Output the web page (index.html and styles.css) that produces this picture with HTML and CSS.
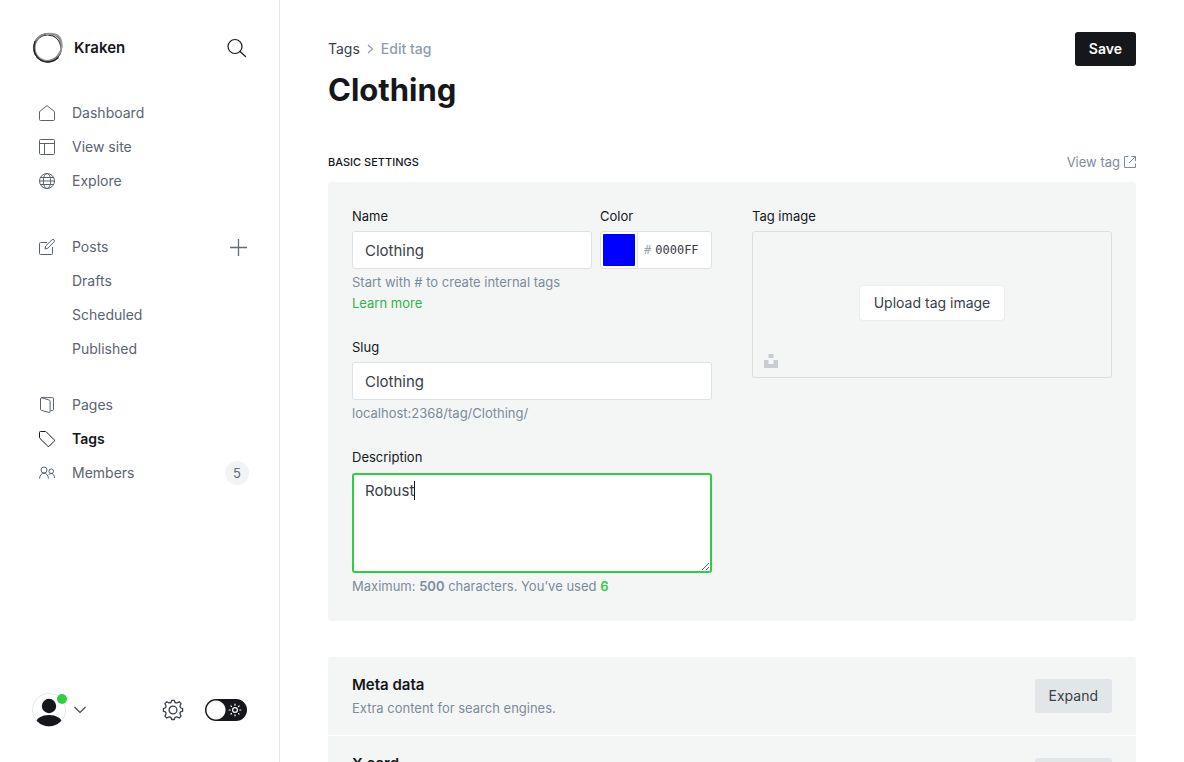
FILE: index.html
```html
<!DOCTYPE html>
<html lang="en">
<head>
<meta charset="utf-8">
<meta name="viewport" content="width=device-width, initial-scale=1">
<title>Clothing - Kraken</title>
<link rel="stylesheet" href="styles.css">
</head>
<body>
<div class="app">
  <aside class="sidebar">
    <header class="brand">
      <svg class="brand-logo" viewBox="0 0 32 32" fill="none" stroke="#222">
        <ellipse cx="15.500" cy="16.500" rx="14" ry="13.500" stroke-width="1" stroke="#333"/>
        <ellipse cx="16.300" cy="15.600" rx="14.600" ry="12.900" stroke-width="1" stroke="#555" transform="rotate(-42 16 16)"/>
        <ellipse cx="15.400" cy="16.400" rx="14.200" ry="13.200" stroke-width=".8" stroke="#444" transform="rotate(60 16 16)"/>
        <ellipse cx="17" cy="15.500" rx="13.800" ry="12.800" stroke-width="1.200" stroke="#888" transform="rotate(-60 16 16)"/>
        <path d="M14 3c6-2.500 12-1.500 14.500 3.500 2.500 5 1.500 12-2.500 17" stroke="#999" stroke-width="1.600"/>
        <path d="M3 9C.5 16 2 24 9 28.500c6 3 13 1.500 17.500-3" stroke-width="1.200"/>
      </svg>
      <span class="brand-name">Kraken</span>
      <button class="icon-button" type="button" aria-label="Search">
        <svg width="20" height="20" viewBox="0 0 20 20" fill="none" stroke="#15171a" stroke-width="1.200" stroke-linecap="round"><circle cx="8" cy="8.500" r="7"/><path d="M13 13.500 18.500 18.500"/></svg>
      </button>
    </header>
    <nav class="nav">
      <ul class="nav-group">
        <li class="nav-row"><a class="nav-link" href="#"><svg class="nav-icon" viewBox="0 0 16 16"><path d="M.5 6.600 8 .6l7.500 6v7.900a1 1 0 0 1-1 1h-13a1 1 0 0 1-1-1z"/></svg>Dashboard</a></li>
        <li class="nav-row"><a class="nav-link" href="#"><svg class="nav-icon" viewBox="0 0 16 16"><rect x=".5" y=".5" width="15" height="15" rx="1"/><path d="M.5 4.500h15M5.500 4.500v11"/></svg>View site</a></li>
        <li class="nav-row"><a class="nav-link" href="#"><svg class="nav-icon" viewBox="0 0 16 16"><circle cx="8" cy="8" r="7.500"/><ellipse cx="8" cy="8" rx="3.700" ry="7.500"/><path d="M.5 8h15M1.500 4.500h13M1.500 11.500h13"/></svg>Explore</a></li>
      </ul>
      <ul class="nav-group">
        <li class="nav-row"><a class="nav-link" href="#"><svg class="nav-icon" viewBox="0 0 16 16"><path d="M8 3.500H1.500a1 1 0 0 0-1 1v10a1 1 0 0 0 1 1h11a1 1 0 0 0 1-1V8"/><path d="m6 10 .6-3L13 .9a1.300 1.300 0 0 1 2.100 1.900L8.800 9.300z"/></svg>Posts</a>
          <button class="icon-button" type="button" aria-label="New post"><svg width="17" height="17" viewBox="0 0 17 17" fill="none" stroke="#626d79" stroke-width="1.300"><path d="M8.500 0v17M0 8.500h17"/></svg></button></li>
        <li class="nav-row"><a class="nav-link nav-sub" href="#">Drafts</a></li>
        <li class="nav-row"><a class="nav-link nav-sub" href="#">Scheduled</a></li>
        <li class="nav-row"><a class="nav-link nav-sub" href="#">Published</a></li>
      </ul>
      <ul class="nav-group">
        <li class="nav-row"><a class="nav-link" href="#"><svg class="nav-icon" viewBox="0 0 16 16"><path d="M2 .6h11.500a1 1 0 0 1 1 1v11a1 1 0 0 1-1 1H11.500M1.500 1.500v10.800a1 1 0 0 0 .8 1l7.400 2.100a1.100 1.100 0 0 0 1.400-1.100V4.100a1 1 0 0 0-.8-1L3 .8a1.100 1.100 0 0 0-1.500.8z"/></svg>Pages</a></li>
        <li class="nav-row"><a class="nav-link is-active" href="#" aria-current="page"><svg class="nav-icon" viewBox="0 0 16 16"><path d="M1.500.5h5a1 1 0 0 1 .7.3l8 8a1 1 0 0 1 0 1.400l-5 5a1 1 0 0 1-1.400 0L.8 7.300a1 1 0 0 1-.3-.7v-5a1 1 0 0 1 1-1.100z"/></svg>Tags</a></li>
        <li class="nav-row"><a class="nav-link" href="#"><svg class="nav-icon" viewBox="0 0 16 16"><circle cx="5" cy="5" r="3"/><circle cx="12.200" cy="6.200" r="2.300"/><path d="M.5 13.500c.2-3 2-5.200 4.500-5.200s4.300 2.200 4.500 5.200M9.400 10.200c.7-1.200 1.600-1.700 2.800-1.700 2 0 3.200 2 3.300 4.500"/></svg>Members</a><span class="badge">5</span></li>
      </ul>
    </nav>
    <footer class="sidebar-footer">
      <button class="account" type="button" aria-label="Account menu">
        <span class="avatar">
          <svg width="34" height="34" viewBox="0 0 34 34"><defs><clipPath id="face"><circle cx="17" cy="17" r="16.300"/></clipPath></defs><circle cx="17" cy="17" r="16.500" fill="#fff" stroke="#e5e8eb"/><g clip-path="url(#face)" fill="#15171a"><circle cx="17" cy="13" r="7.200"/><ellipse cx="17" cy="30" rx="13" ry="8"/></g></svg>
          <span class="status-dot"></span>
        </span>
        <svg width="12" height="8" viewBox="0 0 12 8" fill="none" stroke="#394047" stroke-width="1.100"><path d="m.5 1 5.500 5.500L11.500 1"/></svg>
      </button>
      <button class="icon-button settings" type="button" aria-label="Settings">
        <svg width="22" height="22" viewBox="0 0 22 22" fill="none" stroke="#394047" stroke-width="1.300" stroke-linejoin="round"><circle cx="11" cy="11" r="3.900"/><path d="M9.100 3.200 9.700 1.300h2.600l.6 1.900q1.200 1.100 2.600.4l1.700-.9 1.900 1.900-.9 1.700q-.7 1.400.5 2.500l1.900.7v2.700l-1.900.6q-1.200 1.200-.5 2.600l.9 1.700-1.900 1.900-1.700-.9q-1.400-.7-2.600.5l-.6 1.900H9.700l-.6-1.900q-1.200-1.200-2.600-.5l-1.700.9-1.900-1.900.9-1.700q.7-1.400-.5-2.600l-1.900-.6V9.500l1.900-.7q1.200-1.100.5-2.500l-.9-1.700 1.900-1.900 1.700.9q1.400.7 2.600-.4z"/></svg>
      </button>
      <label class="theme-switch">
        <input type="checkbox" aria-label="Night shift">
        <svg width="14" height="14" viewBox="0 0 14 14" fill="none" stroke="#fff" stroke-width="1.200" stroke-linecap="round"><circle cx="7" cy="7" r="2.400"/><path d="M7 1.200v1M7 11.800v1M1.200 7h1M11.800 7h1M2.900 2.900l.6.6M10.500 10.500l.6.6M2.900 11.100l.6-.6M10.500 3.500l.6-.6"/></svg>
      </label>
    </footer>
  </aside>

  <main class="main">
    <header class="page-header">
      <div>
        <nav class="breadcrumb" aria-label="Breadcrumb"><a href="#">Tags</a><svg width="7" height="10" viewBox="0 0 7 10" fill="none" stroke="#8e9cac" stroke-width="1.200"><path d="m1 1 4.500 4L1 9"/></svg><span>Edit tag</span></nav>
        <h1 class="page-title">Clothing</h1>
      </div>
      <button class="button button-primary" type="button">Save</button>
    </header>

    <div class="section-head">
      <h2 class="section-title">Basic settings</h2>
      <a class="view-link" href="#">View tag<svg width="12" height="12" viewBox="0 0 12 12" fill="none" stroke="currentColor" stroke-width="1"><path d="M4.500.5h-4v11h11v-4M7 .5h4.500V5M11.500.5l-6.500 6.500"/></svg></a>
    </div>

    <form class="panel settings-form">
      <div class="column">
        <div class="field-row">
          <div class="field">
            <label for="name">Name</label>
            <input class="input" id="name" type="text" value="Clothing">
          </div>
          <div class="field color-field">
            <label for="hex">Color</label>
            <div class="color-box">
              <input class="swatch" type="color" value="#0000ff" aria-label="Pick a color">
              <span class="hash">#</span>
              <input class="hex" id="hex" type="text" value="0000FF" maxlength="6">
            </div>
          </div>
        </div>
        <p class="help name-help">Start with # to create internal tags<br><a href="#">Learn more</a></p>
        <div class="field">
          <label for="slug">Slug</label>
          <input class="input" id="slug" type="text" value="Clothing">
          <p class="help">localhost:2368/tag/Clothing/</p>
        </div>
        <div class="field">
          <label for="description">Description</label>
          <div class="textarea-wrap">
            <textarea class="input textarea" id="description">Robust</textarea>
            <span class="caret" aria-hidden="true"></span>
          </div>
          <p class="help">Maximum: <b>500</b> characters. You’ve used <b class="count">6</b></p>
        </div>
      </div>
      <div class="column">
        <div class="field">
          <span class="label" id="image-label">Tag image</span>
          <div class="uploader" role="group" aria-labelledby="image-label">
            <button class="button button-white" type="button">Upload tag image</button>
            <button class="icon-button unsplash" type="button" aria-label="Choose from Unsplash"><svg width="14" height="14" viewBox="0 0 14 14" fill="#c8ccd1"><path d="M4.500 0h5v4h-5zM0 6h4.500v4h5V6H14v8H0z"/></svg></button>
          </div>
        </div>
      </div>
    </form>

    <section class="accordion">
      <div class="panel accordion-row">
        <div><h3>Meta data</h3><p>Extra content for search engines.</p></div>
        <button class="button button-grey" type="button">Expand</button>
      </div>
      <div class="panel accordion-row">
        <div><h3>X card</h3><p>Customized structured data for X</p></div>
        <button class="button button-grey" type="button">Expand</button>
      </div>
    </section>
  </main>
</div>
</body>
</html>
```
FILE: styles.css
```css
* { box-sizing: border-box; }
body { margin: 0; background: #fff; color: #15171a; font: 400 14px/20px Inter, "Open Sans", sans-serif; }
button, input, textarea { font: inherit; color: inherit; }
button { cursor: pointer; }
a { color: inherit; text-decoration: none; }
h1, h2, h3, p, ul { margin: 0; padding: 0; }
ul { list-style: none; }
svg { display: block; flex: none; }

.app { display: flex; height: 100vh; overflow: hidden; }

.sidebar { display: flex; flex: none; flex-direction: column; width: 280px; padding: 32px 32px 35px; border-right: 1px solid #e5e9ed; }
.brand { display: flex; align-items: center; gap: 10px; padding-bottom: 32px; }
.brand-logo { width: 32px; height: 32px; }
.brand-name { flex: 1; font-size: 15px; font-weight: 600; }
.icon-button { display: flex; padding: 0; border: 0; background: none; }
.nav { flex: 1; }
.nav-group { margin-bottom: 32px; }
.nav-group:nth-child(2) { margin-bottom: 22px; }
.nav-row { display: flex; align-items: center; justify-content: space-between; height: 34px; }
.nav-link { display: flex; flex: 1; align-items: center; gap: 17px; padding-left: 7px; color: #5b6470; }
.nav-sub { padding-left: 40px; }
.nav-icon { width: 16px; height: 16px; fill: none; stroke: #59626d; stroke-linejoin: round; }
.is-active { color: #15171a; font-weight: 600; }
.is-active .nav-icon { stroke: #15171a; }
.badge { min-width: 24px; margin-right: -2px; border-radius: 12px; background: #f1f3f4; color: #626d79; font-size: 13px; line-height: 24px; text-align: center; }

.sidebar-footer { display: flex; align-items: center; }
.account { display: flex; flex: 1; align-items: center; gap: 8px; padding: 0; border: 0; background: none; }
.avatar { position: relative; }
.status-dot { position: absolute; top: 1px; right: -1px; width: 10px; height: 10px; border-radius: 50%; background: #30cf43; }
.settings { margin-right: 21px; }
.theme-switch { position: relative; display: flex; }
.theme-switch input { width: 42px; height: 22px; margin: 0; border-radius: 11px; appearance: none; background: radial-gradient(circle at 11px 11px, #fff 9px, #15171a 10px); }
.theme-switch svg { position: absolute; top: 4px; right: 5px; }

.main { flex: 1; min-width: 0; padding: 32px 48px; overflow-y: auto; scrollbar-width: none; }
.page-header { display: flex; align-items: flex-start; justify-content: space-between; }
.breadcrumb { display: flex; align-items: center; gap: 7px; height: 34px; color: #394047; }
.breadcrumb span { color: #8e9cac; font-weight: 500; }
.page-title { font-size: 31px; font-weight: 700; line-height: 48px; }
.button { padding: 0 14px; border: 0; border-radius: 3px; font-size: 14px; line-height: 34px; }
.button-primary { background: #15171a; color: #fff; font-weight: 600; }
.button-white { background: #fff; color: #394047; box-shadow: 0 0 2px rgba(0, 0, 0, .12); }
.button-grey { background: #e3e6e9; color: #394047; }

.section-head { display: flex; align-items: center; justify-content: space-between; margin: 38px 0 10px; }
.section-title { font-size: 11px; font-weight: 500; text-transform: uppercase; }
.view-link { display: flex; align-items: center; gap: 4px; color: #7c8b9a; font-size: 13px; }

.panel { background: #f4f6f6; }
.settings-form { display: grid; grid-template-columns: 1fr 1fr; gap: 40px; padding: 24px; border-radius: 3px; }
.field-row { display: flex; gap: 8px; }
.field-row .field { flex: 1; min-width: 0; }
.field-row .color-field { flex: 0 0 112px; }
.field, .name-help { margin-bottom: 23px; }
.field-row .field, .column > .field:last-child { margin-bottom: 0; }
.field label, .label { display: block; margin-bottom: 5px; font-size: 13px; }
.input { display: block; width: 100%; height: 38px; padding: 0 12px; border: 1px solid #dde1e5; border-radius: 3px; outline: 0; background: #fff; color: #394047; font-size: 15px; }
.textarea-wrap { position: relative; margin-top: 6px; }
.textarea { height: 100px; padding: 6px 11px; border: 2px solid #30cf43; resize: vertical; }
.caret { position: absolute; top: 8px; left: 62px; width: 1px; height: 19px; background: #15171a; }
.help { padding-top: 3px; color: #7c8b9a; font-size: 13px; line-height: 21px; }
.help a { color: #30b24a; }
.help b { font-weight: 600; }
.help .count { color: #30cf43; }
.color-box { display: flex; align-items: center; height: 38px; padding-left: 2px; overflow: hidden; border: 1px solid #dde1e5; border-radius: 3px; background: #fff; font: 12px/20px "DejaVu Sans Mono", monospace; }
.swatch { width: 32px; height: 32px; padding: 0; border: 0; background: none; appearance: none; }
.swatch::-webkit-color-swatch-wrapper { padding: 0; }
.swatch::-webkit-color-swatch { border: 0; border-radius: 1px; }
.hash { margin-left: 2px; padding: 8px 4px 8px 6px; border-left: 1px solid #dde1e5; color: #9aa5b1; }
.hex { flex: 1; min-width: 0; padding: 0; border: 0; outline: 0; background: none; color: #394047; }
.uploader { position: relative; display: flex; align-items: center; justify-content: center; height: 147px; padding-bottom: 4px; border: 1px solid #dadedf; border-radius: 3px; }
.unsplash { position: absolute; bottom: 9px; left: 11px; }

.accordion { display: flex; flex-direction: column; gap: 1px; margin-top: 36px; overflow: hidden; border-radius: 3px; }
.accordion-row { display: flex; align-items: center; justify-content: space-between; padding: 16px 24px; }
.accordion-row h3 { font-size: 15px; font-weight: 600; line-height: 24px; }
.accordion-row p { color: #7c8b9a; font-size: 13px; line-height: 22px; }
```
